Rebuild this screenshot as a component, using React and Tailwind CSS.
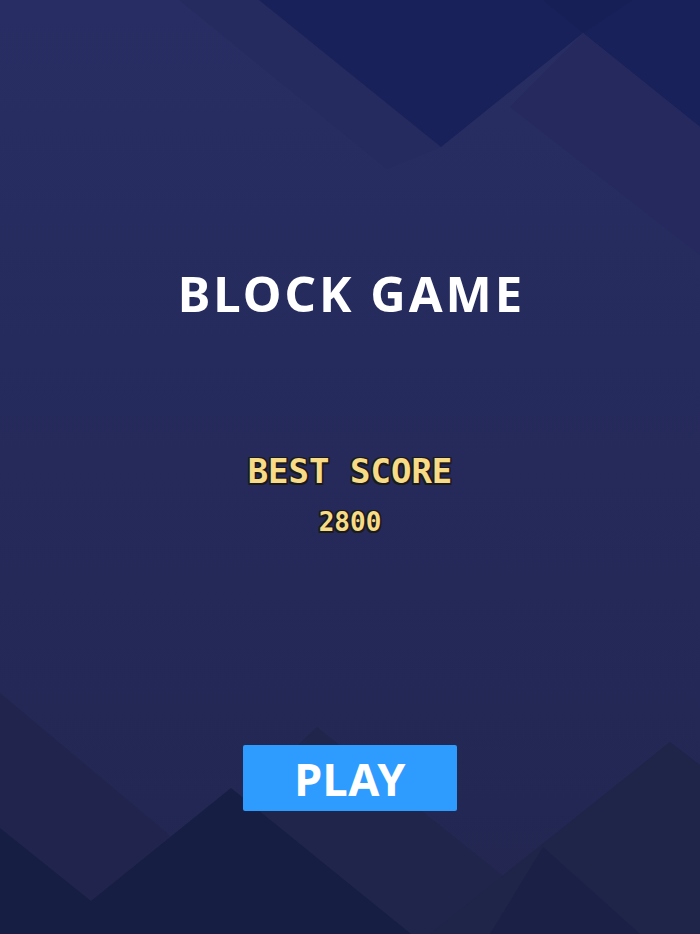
import React from "react";

// Faceted backdrop: flat polygons in slightly different navy shades
const Backdrop = () => (
  <svg
    className="absolute inset-0 h-full w-full"
    viewBox="0 0 700 934"
    preserveAspectRatio="none"
  >
    <defs>
      <linearGradient id="base" x1="0" y1="0" x2="0" y2="1">
        <stop offset="0" stopColor="#282e63" />
        <stop offset="0.5" stopColor="#252a5b" />
        <stop offset="1" stopColor="#222650" />
      </linearGradient>
    </defs>
    <rect width="700" height="934" fill="url(#base)" />

    {/* top facets */}
    <polygon points="179,0 259,0 441,147 387,169" fill="#262b5f" />
    <polygon points="259,0 700,0 700,127 583,33 441,147" fill="#18215a" />
    <polygon points="543,0 633,0 583,33" fill="#172056" />
    <polygon points="510,107 583,33 700,127 700,255" fill="#25295d" />

    {/* bottom ridges, back to front */}
    <polygon points="0,693 167,833 260,934 0,934" fill="#21254d" />
    <polygon points="100,934 317,727 575,934" fill="#20254b" />
    <polygon points="430,934 670,742 700,765 700,934" fill="#1f2449" />
    <polygon points="490,934 543,847 640,934" fill="#1b2146" />
    <polygon points="0,828 91,901 231,788 411,934 0,934" fill="#161e44" />
  </svg>
);

const outline = {
  textShadow:
    "-1.5px -1.5px 0 #1b1b1b, 1.5px -1.5px 0 #1b1b1b, -1.5px 1.5px 0 #1b1b1b, 1.5px 1.5px 0 #1b1b1b, 0 1.5px 0 #1b1b1b, 0 -1.5px 0 #1b1b1b, 1.5px 0 0 #1b1b1b, -1.5px 0 0 #1b1b1b",
};

export default function App() {
  return (
    <div className="relative h-[934px] w-[700px] overflow-hidden bg-[#252a5b]">
      <Backdrop />
      <div className="relative flex h-full flex-col items-center">
        <h1 className="mt-[269px] pl-[3px] text-[49px] leading-none font-bold tracking-[3px] text-white [font-family:'Noto_Sans',sans-serif]">
          BLOCK GAME
        </h1>

        <div className="mt-[136px] flex flex-col items-center text-[#f8db86] [font-family:'DejaVu_Sans_Mono',monospace]">
          <div className="text-[34px] leading-none font-bold" style={outline}>
            BEST SCORE
          </div>
          <div className="mt-[21px] text-[26px] leading-none font-bold" style={outline}>
            2800
          </div>
        </div>

        <button className="mt-[210px] flex h-[66px] w-[214px] items-center justify-center rounded-[2px] bg-[#2e9bff] text-[45px] leading-none font-bold tracking-[0.5px] text-white [font-family:'Noto_Sans',sans-serif]">
          PLAY
        </button>
      </div>
    </div>
  );
}
